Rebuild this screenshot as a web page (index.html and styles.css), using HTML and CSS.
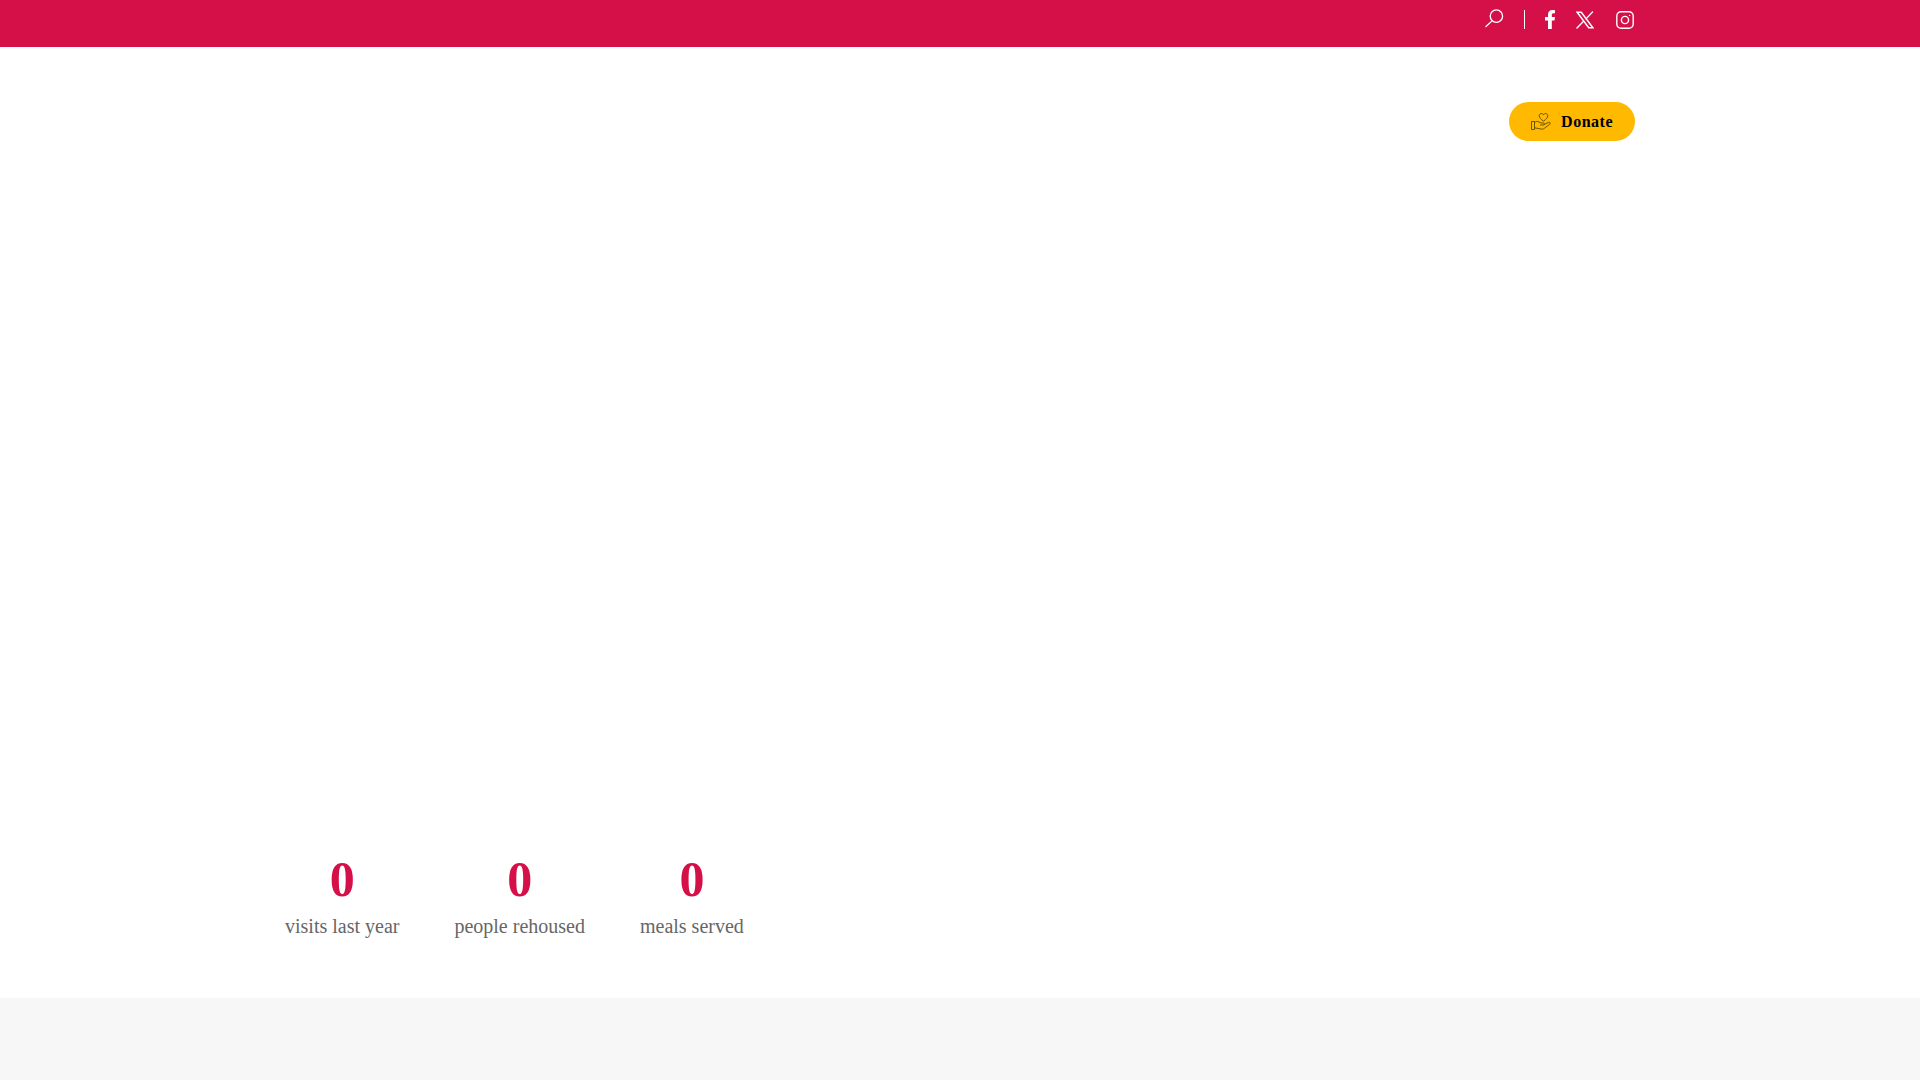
FILE: index.html
```html
<!DOCTYPE html>
<html lang="en">

<head>
  <meta charset="UTF-8" />
  <meta name="viewport" content="width=device-width, initial-scale=1.0" />
  <title>Donate</title>
  <link rel="stylesheet" href="styles.css">
</head>

<body>
  <section class="topbar">
    <div class="container topbar-inner">
      <a class="top-icon search-icon" href="#" aria-label="Search">
        <svg width="19" height="19" viewBox="0 0 20 20" fill="none" stroke="#fff" stroke-width="1.4">
          <circle cx="12" cy="7.5" r="6.5" />
          <path d="M7.5 12.5 L1 18.5" stroke-linecap="round" />
        </svg>
      </a>
      <span class="divider"></span>
      <a class="top-icon fb-icon" href="#" aria-label="Facebook">
        <svg width="10" height="19" viewBox="0 0 10 19" fill="#fff">
          <path d="M3 19V10.5H0V7H3V4.6C3 1.6 4.8 0 7.4 0C8.7 0 10 .2 10 .2V3.2H8.6C7.1 3.2 6.8 4.1 6.8 5V7H10L9.5 10.5H6.8V19Z" />
        </svg>
      </a>
      <a class="top-icon x-icon" href="#" aria-label="X">
        <svg width="18" height="18" viewBox="0 0 19 18" fill="none" stroke="#fff" stroke-width="1.5">
          <path d="M1.2 .8H5.6L17.8 17.2H13.4Z" />
          <path d="M17.4 .5L10.6 7.8M8 10.4L1 17.5" stroke-linecap="round" />
        </svg>
      </a>
      <a class="top-icon" href="#" aria-label="Instagram">
        <svg width="18" height="18" viewBox="0 0 18 18" fill="none" stroke="#fff" stroke-width="1.4">
          <rect x=".8" y=".8" width="16.4" height="16.4" rx="4.2" />
          <circle cx="9" cy="9" r="3.6" />
          <circle cx="13.6" cy="4.4" r=".7" fill="#fff" stroke="none" />
        </svg>
      </a>
    </div>
  </section>

  <header class="navbar">
    <div class="container navbar-inner">
      <a class="donate" href="#">
        <svg width="20" height="18" viewBox="0 0 20 18" fill="none" stroke="#4a3c00" stroke-width="0.8">
          <path d="M12.5 8.2C9.8 6.2 8.2 4.6 8.2 2.8C8.2 1.4 9.3 .5 10.4 .5C11.3 .5 12.1 1 12.5 1.8C12.9 1 13.7 .5 14.6 .5C15.7 .5 16.8 1.4 16.8 2.8C16.8 4.6 15.2 6.2 12.5 8.2Z" />
          <path d="M.5 8.5H3.5V16.5H.5Z" />
          <path d="M3.5 9.5C5 8.3 6.5 8.2 8 9L10 10H12.5C13.5 10 13.5 12 12.5 12H9M13 11.5L17.5 9.4C19 8.9 19.8 10.2 18.8 11.2L13 15.5C12 16.2 11 16.3 10 16L3.5 14.8" />
        </svg>
        <span>Donate</span>
      </a>
    </div>
  </header>

  <section class="hero"></section>

  <section class="stats">
    <div class="container stats-row">
      <div class="stat">
        <div class="stat-num">0</div>
        <div class="stat-label">visits last year</div>
      </div>
      <div class="stat">
        <div class="stat-num">0</div>
        <div class="stat-label">people rehoused</div>
      </div>
      <div class="stat">
        <div class="stat-num">0</div>
        <div class="stat-label">meals served</div>
      </div>
    </div>
  </section>

  <section class="lower"></section>
</body>

</html>
```

FILE: styles.css
```css
/* Reset some default styles */
* {
    margin: 0;
    padding: 0;
    box-sizing: border-box;
}

html,
body {
    height: 1080px;
    overflow: hidden;
}

body {
    font-family: "Liberation Serif", "Times New Roman", serif;
    background-color: #fff;
    display: flex;
    flex-direction: column;
}

.container {
    width: 1350px;
    margin: 0 auto;
}

/* Top red bar */
.topbar {
    height: 47px;
    background-color: #d50f47;
}

.topbar-inner {
    display: flex;
    justify-content: flex-end;
    align-items: center;
    height: 39px;
    padding-right: 1px;
}

.top-icon {
    display: flex;
    align-items: center;
}

.search-icon {
    margin-right: 20px;
    margin-bottom: 2px;
}

.divider {
    width: 1px;
    height: 19px;
    background-color: #fff;
    margin-right: 20px;
}

.fb-icon {
    margin-right: 21px;
}

.x-icon {
    margin-right: 22px;
}

/* Nav with donate button */
.navbar {
    height: 147px;
    padding-top: 55px;
}

.navbar-inner {
    display: flex;
    justify-content: flex-end;
}

.donate {
    display: flex;
    align-items: center;
    gap: 10px;
    height: 39px;
    padding: 0 22px;
    background-color: #ffb900;
    border-radius: 20px;
    color: #000;
    font-size: 16px;
    font-weight: bold;
    letter-spacing: 0.5px;
    text-decoration: none;
}

.hero {
    height: 657px;
}

/* Counters */
.stats {
    height: 147px;
}

.stats-row {
    display: flex;
    gap: 55px;
}

.stat {
    text-align: center;
}

.stat-num {
    color: #d50f47;
    font-size: 50px;
    font-weight: bold;
    line-height: 57px;
}

.stat-label {
    color: #666;
    font-size: 20px;
    line-height: 30px;
    margin-top: 3px;
}

.lower {
    flex: 1;
    background-color: #f7f7f7;
}
```
